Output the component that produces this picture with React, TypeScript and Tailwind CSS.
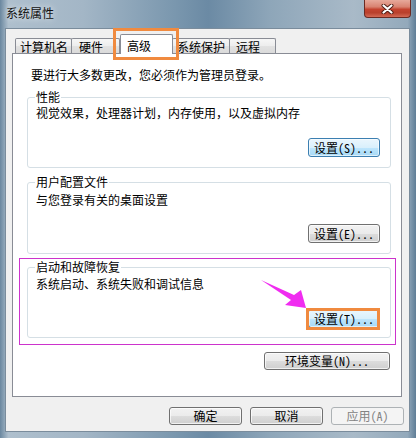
import React from "react";

type BtnProps = { children: React.ReactNode; kind?: "gray" | "blue" | "disabled"; className: string };

function Btn({ children, kind = "gray", className }: BtnProps) {
  const base =
    kind === "blue"
      ? "border border-[#3c7fb1] bg-[linear-gradient(180deg,#eaf6fd_0%,#d9f0fc_50%,#bee6fd_50%,#a7d9f5_100%)] shadow-[inset_0_0_0_1px_rgba(255,255,255,0.6)] text-black"
      : kind === "disabled"
      ? "border border-[#adb2b5] bg-[#f4f4f4] text-[#838383]"
      : "border border-[#707070] bg-[linear-gradient(180deg,#f2f2f2_0%,#ebebeb_50%,#dddddd_50%,#cfcfcf_100%)] shadow-[inset_0_0_0_1px_rgba(255,255,255,0.7)] text-black";
  return (
    <div className={`${base} ${className} rounded-[3px] flex items-center justify-center leading-[16px] whitespace-nowrap`}>
      {children}
    </div>
  );
}

const tabGray =
  "h-[15px] mb-[1px] border-t border-l border-r border-[#898c95] rounded-t-[2px] bg-[linear-gradient(180deg,#f6f6f6_0%,#ededed_50%,#e2e2e2_50%,#dadada_100%)] pt-[1px] leading-[14px] whitespace-nowrap";

export default function App() {
  return (
    <div className="relative w-[416px] h-[438px] overflow-hidden font-['Noto_Sans_Mono_CJK_SC','Noto_Sans_CJK_SC',sans-serif] text-[12px] leading-[16px] text-black bg-[linear-gradient(90deg,#6a879f_0%,#aebfcd_2%,#a3b6c6_20%,#7a97ae_42%,#6b8aa4_50%,#8ea6b9_65%,#a9bac8_85%,#93a9bb_98%,#5f7d96_100%)]">
      {/* title bar */}
      <div className="flex h-[28px] justify-between items-start">
        <div className="pl-[6px] pt-[5px] text-[12px] leading-[16px] text-[#111] [text-shadow:0_0_6px_rgba(255,255,255,0.9)]">系统属性</div>
        <div className="mr-[5px] w-[47px] h-[18px] rounded-b-[4px] border border-t-0 border-[#6b2a22] bg-[linear-gradient(180deg,#e7a99b_0%,#d98371_40%,#c4432f_55%,#b9402c_75%,#d46a55_100%)] flex items-center justify-center">
          <svg width="13" height="10" viewBox="0 0 13 10">
            <path d="M2.5 1.5 L10.5 8.5 M10.5 1.5 L2.5 8.5" stroke="#4a1a12" strokeWidth="4" strokeLinecap="round" />
            <path d="M2.5 1.5 L10.5 8.5 M10.5 1.5 L2.5 8.5" stroke="#ffffff" strokeWidth="2.2" strokeLinecap="round" />
          </svg>
        </div>
      </div>

      {/* client area */}
      <div className="ml-[5px] w-[405px] h-[404px] border border-[#7a8c9c] bg-[#f0f0f0] flex flex-col pt-[5px]">
        {/* tabs */}
        <div className="relative z-10 flex items-end h-[20px] pl-[9px]">
          <div className={`${tabGray} w-[57px] pl-[4px]`}>计算机名</div>
          <div className={`${tabGray} w-[49px] -ml-[1px] pl-[7px]`}>硬件</div>
          <div className="relative z-20 w-[53px] h-[20px] border-t border-l border-r border-[#898c95] rounded-t-[2px] bg-white pl-[6px] pt-[4px] leading-[14px] whitespace-nowrap">高级</div>
          <div className={`${tabGray} w-[58px] -ml-[1px] pl-[4px]`}>系统保护</div>
          <div className={`${tabGray} w-[47px] -ml-[1px] pl-[6px]`}>远程</div>
        </div>

        {/* panel */}
        <div className="ml-[6px] -mt-[1px] w-[390px] h-[344px] border border-[#898c95] bg-white pl-[14px] pt-[13px] flex flex-col">
          <div className="ml-[4px] h-[16px] whitespace-nowrap">要进行大多数更改，您必须作为管理员登录。</div>

          <fieldset className="mt-[6px] w-[364px] border border-[#d5dfe5] rounded-[3px] pb-[10px]">
            <legend className="ml-[7px] px-[1px] leading-[16px]">性能</legend>
            <div className="pl-[8px] h-[16px] whitespace-nowrap">视觉效果，处理器计划，内存使用，以及虚拟内存</div>
            <div className="flex justify-end pr-[10px] mt-[17px]">
              <Btn kind="blue" className="w-[72px] h-[19px]">设置(S)...</Btn>
            </div>
          </fieldset>

          <fieldset className="mt-[6px] w-[364px] border border-[#d5dfe5] rounded-[3px] pb-[10px]">
            <legend className="ml-[7px] px-[1px] leading-[16px]">用户配置文件</legend>
            <div className="pl-[8px] h-[16px] mt-[2px] whitespace-nowrap">与您登录有关的桌面设置</div>
            <div className="flex justify-end pr-[10px] mt-[16px]">
              <Btn className="w-[72px] h-[19px]">设置(E)...</Btn>
            </div>
          </fieldset>

          <fieldset className="mt-[5px] w-[364px] border border-[#d5dfe5] rounded-[3px] pb-[9px]">
            <legend className="ml-[7px] px-[1px] leading-[16px]">启动和故障恢复</legend>
            <div className="pl-[8px] h-[16px] mt-[1px] whitespace-nowrap">系统启动、系统失败和调试信息</div>
            <div className="flex justify-end pr-[10px] mt-[17px]">
              <Btn kind="blue" className="w-[72px] h-[19px]">设置(T)...</Btn>
            </div>
          </fieldset>

          <div className="flex justify-end w-[364px] pr-[1px] mt-[14px]">
            <Btn className="w-[126px] h-[18px]">环境变量(N)...</Btn>
          </div>
        </div>

        {/* bottom buttons */}
        <div className="mt-[10px] flex justify-end gap-[8px] pr-[5px]">
          <Btn className="w-[73px] h-[18px]">确定</Btn>
          <Btn className="w-[73px] h-[18px]">取消</Btn>
          <Btn kind="disabled" className="w-[73px] h-[18px]">应用(A)</Btn>
        </div>
      </div>

      {/* annotations */}
      <div className="absolute left-[113px] top-[28px] w-[66px] h-[32px] border-[3px] border-[#f08a3f] z-30 pointer-events-none" />
      <div className="absolute left-[19px] top-[258px] w-[377px] h-[87px] border border-[#cc33cc] pointer-events-none" />
      <div className="absolute left-[306px] top-[308px] w-[74px] h-[22px] border-[3px] border-[#f08a3f] pointer-events-none" />
      <svg className="absolute left-0 top-0 pointer-events-none" width="416" height="438" viewBox="0 0 416 438">
        <polygon points="261,280 294,295 301,290 306,308 285,305 291,300" fill="#f02cf0" />
      </svg>
    </div>
  );
}
